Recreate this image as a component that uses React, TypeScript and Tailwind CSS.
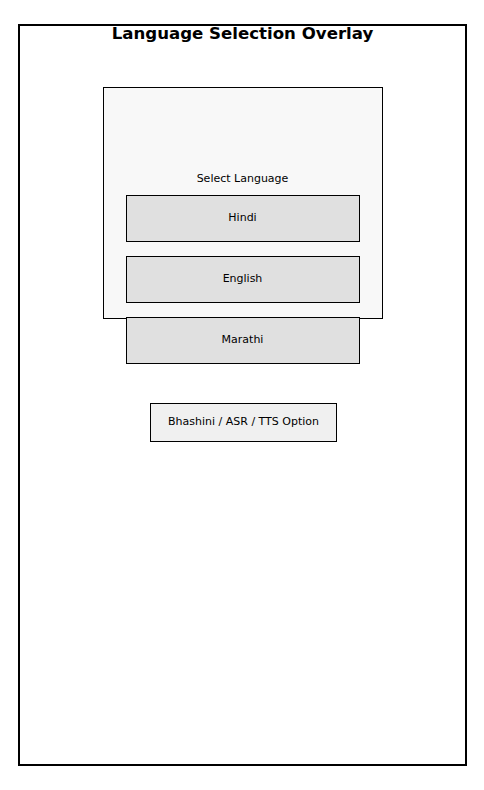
const languages = ["Hindi", "English", "Marathi"];

const LangButton = ({ label }: { label: string }) => (
  <button className="w-[234px] h-[47px] shrink-0 border border-black bg-[#e0e0e0] text-[11px] text-black">
    {label}
  </button>
);

const App = () => {
  return (
    <div
      className="w-[484px] h-[790px] bg-white pt-[24px] pl-[18px]"
      style={{ fontFamily: '"DejaVu Sans", Verdana, sans-serif' }}
    >
      <div className="w-[449px] h-[742px] border-2 border-black flex flex-col items-center">
        <h1 className="-mt-[2px] text-[16.6px] leading-[20px] font-bold text-black">
          Language Selection Overlay
        </h1>

        <div className="mt-[43px] w-[280px] h-[232px] shrink-0 border border-black bg-[#f8f8f8] flex flex-col items-center pt-[84px]">
          <p className="text-[11px] leading-[13px] text-black">Select Language</p>
          <div className="mt-[10px] flex flex-col gap-[14px]">
            {languages.map((lang) => (
              <LangButton key={lang} label={lang} />
            ))}
          </div>
        </div>

        <button className="mt-[84px] ml-[2px] w-[187px] h-[39px] border border-black bg-[#f0f0f0] text-[11px] text-black">
          Bhashini / ASR / TTS Option
        </button>
      </div>
    </div>
  );
};

export default App;
